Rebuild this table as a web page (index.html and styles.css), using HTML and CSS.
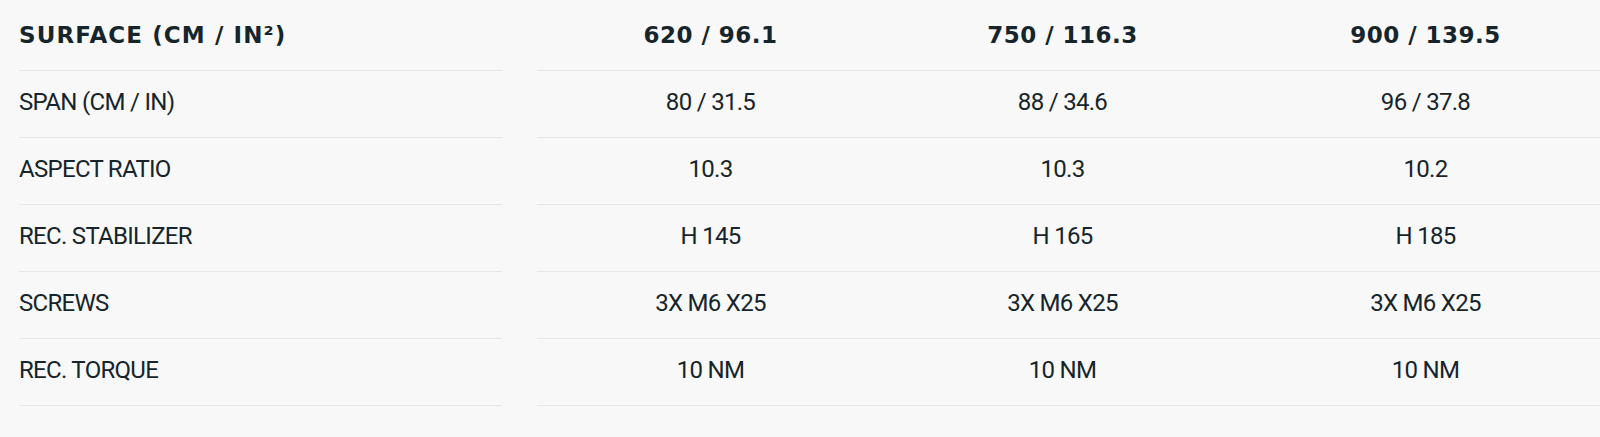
FILE: index.html
```html
<!DOCTYPE html>
<html lang="en">
<head>
<meta charset="utf-8">
<title>Specs</title>
<link rel="stylesheet" href="styles.css">
</head>
<body>
<div class="specs">
  <div class="row head">
    <div class="label">SURFACE (CM / IN²)</div>
    <div class="values">
      <div class="cell c1">620 / 96.1</div>
      <div class="cell c2">750 / 116.3</div>
      <div class="cell c3">900 / 139.5</div>
    </div>
  </div>
  <div class="row">
    <div class="label">SPAN (CM / IN)</div>
    <div class="values">
      <div class="cell c1">80 / 31.5</div>
      <div class="cell c2">88 / 34.6</div>
      <div class="cell c3">96 / 37.8</div>
    </div>
  </div>
  <div class="row">
    <div class="label">ASPECT RATIO</div>
    <div class="values">
      <div class="cell c1">10.3</div>
      <div class="cell c2">10.3</div>
      <div class="cell c3">10.2</div>
    </div>
  </div>
  <div class="row">
    <div class="label">REC. STABILIZER</div>
    <div class="values">
      <div class="cell c1">H 145</div>
      <div class="cell c2">H 165</div>
      <div class="cell c3">H 185</div>
    </div>
  </div>
  <div class="row">
    <div class="label">SCREWS</div>
    <div class="values">
      <div class="cell c1">3X M6 X25</div>
      <div class="cell c2">3X M6 X25</div>
      <div class="cell c3">3X M6 X25</div>
    </div>
  </div>
  <div class="row">
    <div class="label">REC. TORQUE</div>
    <div class="values">
      <div class="cell c1">10 NM</div>
      <div class="cell c2">10 NM</div>
      <div class="cell c3">10 NM</div>
    </div>
  </div>
</div>
</body>
</html>
```

FILE: styles.css
```css
html, body {
  margin: 0;
  padding: 0;
  background: #f8f8f8;
  overflow: hidden;
}

body {
  width: 1600px;
  height: 437px;
  color: #16252b;
  font-family: Roboto, "Liberation Sans", sans-serif;
}

.specs {
  padding-left: 19px;
  display: flex;
  flex-direction: column;
}

.row {
  display: flex;
  height: 67px;
}

.label,
.values {
  border-bottom: 1px solid #e6e6e6;
  box-sizing: border-box;
  display: flex;
  align-items: center;
}

.label {
  width: 483px;
  flex: none;
  font-size: 24px;
  letter-spacing: -0.7px;
  padding-bottom: 5px;
  box-sizing: border-box;
}

.values {
  margin-left: 35px;
  flex: none;
  width: 1073px;
}

.cell {
  text-align: center;
  font-size: 24px;
  letter-spacing: -0.7px;
  padding-bottom: 5px;
}

.c1 { width: 347px; }
.c2 { width: 357px; }
.c3 { width: 369px; }

.row.head {
  height: 71px;
}

.row.head .label,
.row.head .cell {
  font-family: "DejaVu Sans", "Liberation Sans", sans-serif;
  font-weight: 700;
  font-size: 23px;
  padding-bottom: 0;
}

.row.head .label {
  letter-spacing: 1.1px;
}

.row.head .cell {
  letter-spacing: 0.5px;
}
```
